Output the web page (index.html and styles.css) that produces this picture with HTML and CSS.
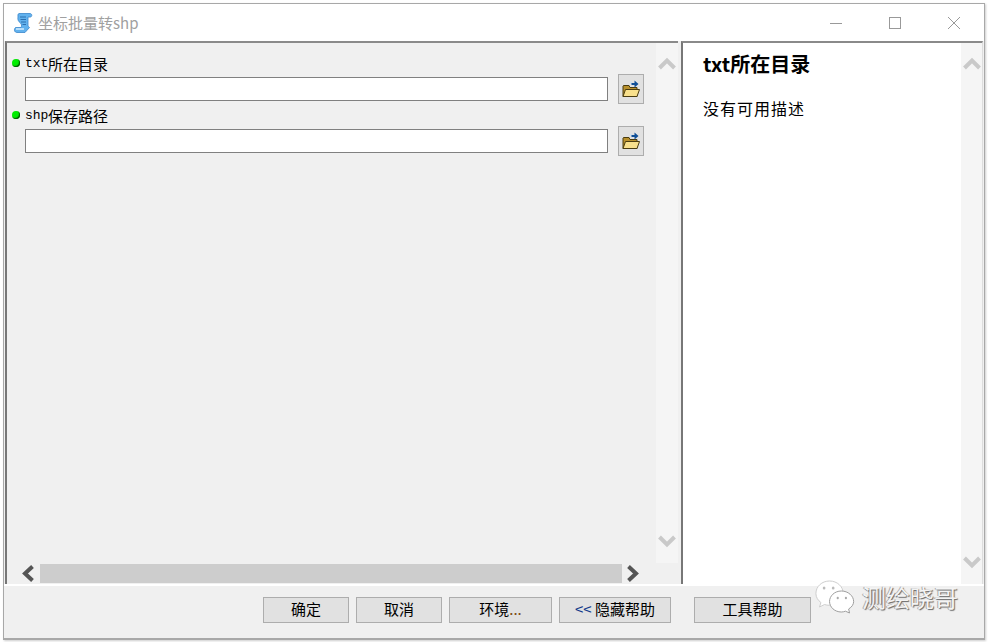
FILE: index.html
```html
<!DOCTYPE html>
<html lang="zh">
<head>
<meta charset="utf-8">
<title>坐标批量转shp</title>
<link rel="stylesheet" href="styles.css">
</head>
<body>
<svg class="defs" width="0" height="0" aria-hidden="true">
  <symbol id="folder" viewBox="0 0 18 18">
    <path d="M1 6V16.500H15V7.500H8L7 5.500H1.500Z" fill="#b8902c" stroke="#4a3c10" stroke-width="1"/>
    <path d="M1 16.500L3.500 9.500H17.500L15 16.500Z" fill="#f8e08c" stroke="#4a3c10" stroke-width="1"/>
    <path d="M8 2.500C8 2.500 9 1.500 10 1.500V4H8Z" fill="#cfe0f0"/>
    <path d="M9.500 3H12.500V.5L16.500 4L12.500 7.500V5H9.500Z" fill="#0f4f98"/>
  </symbol>
</svg>
<div class="window">
  <header class="titlebar">
    <svg class="appicon" width="20" height="22" viewBox="0 0 20 22">
      <path d="M6 1.500H17C19 1.500 19.500 4.500 17.500 5H15V13C15 14 15.500 15 16.500 15.500L12 20.500H4C1.500 20.500 .5 17.500 2.500 15.500H8C9 14 8.500 12 7.500 11C5 9.500 4.500 7 5 5C5 3.500 4.500 2 6 1.500Z" fill="#62b2ee" stroke="#3a86cc" stroke-width=".8"/>
      <path d="M7 5H13M7.500 7.500H13M8 10H13M9.500 12.500H13" stroke="#1f5f9f" stroke-width=".8"/>
      <path d="M3 17H11" stroke="#d5edff" stroke-width="1.500"/>
    </svg>
    <span class="title">坐标批量转shp</span>
    <div class="winctl">
      <svg width="12" height="12" viewBox="0 0 12 12"><path d="M0 6.500H12" stroke="#999" stroke-width="1"/></svg>
      <svg width="12" height="12" viewBox="0 0 12 12"><rect x=".5" y=".5" width="11" height="11" fill="none" stroke="#999"/></svg>
      <svg width="12" height="12" viewBox="0 0 12 12"><path d="M0 0L12 12M12 0L0 12" stroke="#999" stroke-width="1"/></svg>
    </div>
  </header>
  <div class="main">
    <section class="left">
      <div class="leftrow">
        <div class="form">
          <div class="field">
            <div class="label"><i class="dot"></i><span class="mono">txt</span>所在目录</div>
            <div class="inputrow">
              <div class="input"></div>
              <button class="browse" type="button"><svg width="18" height="18"><use href="#folder"/></svg></button>
            </div>
          </div>
          <div class="field">
            <div class="label"><i class="dot"></i><span class="mono">shp</span>保存路径</div>
            <div class="inputrow">
              <div class="input"></div>
              <button class="browse" type="button"><svg width="18" height="18"><use href="#folder"/></svg></button>
            </div>
          </div>
        </div>
        <div class="vscroll">
          <svg width="18" height="13" viewBox="0 0 18 13"><path d="M1.500 11L9 3.500L16.500 11" fill="none" stroke="#c9c9c9" stroke-width="4"/></svg>
          <svg width="18" height="13" viewBox="0 0 18 13"><path d="M1.500 2L9 9.500L16.500 2" fill="none" stroke="#c9c9c9" stroke-width="4"/></svg>
        </div>
      </div>
      <div class="hscroll">
        <svg class="harrow" width="14" height="17" viewBox="0 0 14 17"><path d="M11.500 1.500L4 8.500L11.500 15.500" fill="none" stroke="#555" stroke-width="4"/></svg>
        <div class="thumb"></div>
        <svg class="harrow" width="14" height="17" viewBox="0 0 14 17"><path d="M2.500 1.500L10 8.500L2.500 15.500" fill="none" stroke="#555" stroke-width="4"/></svg>
      </div>
    </section>
    <section class="right">
      <div class="help">
        <h1 class="helptitle">txt所在目录</h1>
        <p class="helptext">没有可用描述</p>
      </div>
      <div class="vscroll rightscroll">
        <svg width="18" height="13" viewBox="0 0 18 13"><path d="M1.500 11L9 3.500L16.500 11" fill="none" stroke="#c9c9c9" stroke-width="4"/></svg>
        <svg width="18" height="13" viewBox="0 0 18 13"><path d="M1.500 2L9 9.500L16.500 2" fill="none" stroke="#c9c9c9" stroke-width="4"/></svg>
      </div>
    </section>
  </div>
  <footer class="footer">
    <button class="btn w86" type="button">确定</button>
    <button class="btn w86" type="button">取消</button>
    <button class="btn w103" type="button">环境<span class="dots">...</span></button>
    <button class="btn w112" type="button"><span class="arrows">&lt;&lt;</span> 隐藏帮助</button>
    <button class="btn w117 gapl" type="button">工具帮助</button>
  </footer>
  <div class="watermark">
    <svg width="40" height="34" viewBox="0 0 44 34" preserveAspectRatio="none">
      <path d="M16 1C7.500 1 1 6.500 1 13.500C1 17.500 3.500 20.500 6.500 22.500L5 27L10.500 24.500C12 25 14 25.300 16 25.300C24 25.300 31 20 31 13.500C31 6.500 24.500 1 16 1Z" fill="#fff" stroke="#ccc" stroke-width="1"/>
      <path d="M29 11C21.500 11 16 16 16 21.500C16 27 21.500 32 29 32C30.500 32 32 31.700 33.500 31.200L38 33L37 29C40.500 27 42.500 24.500 42.500 21.500C42.500 16 36.500 11 29 11Z" fill="#fff" stroke="#999" stroke-width="1"/>
      <circle cx="10" cy="8" r="1.500" fill="#bbb"/><circle cx="20" cy="8" r="1.500" fill="#bbb"/>
      <circle cx="25" cy="18" r="1.200" fill="#aaa"/><circle cx="34" cy="18" r="1.200" fill="#aaa"/>
    </svg>
    <span class="wmtext">测绘晓哥</span>
  </div>
</div>
</body>
</html>
```
FILE: styles.css
```css
* { box-sizing: border-box; }
html, body { margin: 0; height: 100%; background: #fff; overflow: hidden; }
body {
  padding: 3px 5px 2px 3px;
  font-family: "Noto Sans CJK SC", "Liberation Sans", sans-serif;
  color: #000;
}
.defs { position: absolute; }
.window {
  position: relative;
  display: flex;
  flex-direction: column;
  height: 637px;
  border: 1px solid #a8a8a8;
  border-width: 1px 1px 2px 1px;
  background: #f0f0f0;
  box-shadow: 1px 1px 2px rgba(0, 0, 0, .2);
}
.titlebar {
  display: flex;
  align-items: center;
  height: 37px;
  flex: none;
  background: #fff;
  padding-left: 9px;
}
.appicon { flex: none; }
.title {
  margin-left: 5px;
  font-size: 15px;
  line-height: 20px;
  color: #a0a0a0;
}
.winctl {
  margin-left: auto;
  display: flex;
  gap: 47px;
  padding-right: 24px;
}
.main {
  flex: 1;
  display: flex;
  min-height: 0;
  margin: 0 1px;
}
.left {
  width: 673px;
  flex: none;
  display: flex;
  flex-direction: column;
  background: #f0f0f0;
  border-left: 2px solid #777;
  border-top: 2px solid #8a8a8a;
}
.leftrow { flex: 1; display: flex; min-height: 0; }
.form { flex: 1; padding-top: 10px; }
.field { height: 52px; }
.label {
  display: flex;
  align-items: center;
  height: 22px;
  font-size: 15px;
  line-height: 22px;
  padding-left: 5px;
}
.dot {
  width: 8px;
  height: 8px;
  border-radius: 50%;
  background: #00ee00;
  box-shadow: inset -1px -1px 1px #005000;
  margin-right: 5px;
  margin-top: -3px;
  flex: none;
}
.mono { font-family: "Liberation Mono", monospace; font-size: 13px; width: 23px; }
.inputrow { display: flex; align-items: center; padding-left: 18px; gap: 10px; margin-top: 2px; height: 24px; }
.input { width: 583px; height: 24px; background: #fff; border: 1px solid #808080; flex: none; }
.browse {
  width: 26px;
  height: 30px;
  padding: 0;
  flex: none;
  display: flex;
  align-items: center;
  justify-content: center;
  background: #e1e1e1;
  border: 1px solid #adadad;
  border-radius: 0;
}
.vscroll {
  width: 22px;
  flex: none;
  display: flex;
  flex-direction: column;
  justify-content: space-between;
  align-items: center;
  background: #f5f5f5;
  padding: 14px 0 15px;
}
.hscroll { height: 21px; flex: none; display: flex; align-items: flex-end; padding: 0 0 1px 14px; margin-right: 22px; }
.harrow { margin-bottom: 1px; flex: none; }
.thumb { width: 582px; height: 19px; background: #cdcdcd; margin-left: 5px; margin-right: 4px; flex: none; }
.right {
  flex: 1;
  margin-left: 3px;
  display: flex;
  background: #fff;
  border-left: 2px solid #777;
  border-top: 2px solid #8a8a8a;
  border-right: 1px solid #ddd;
  min-width: 0;
}
.help { flex: 1; padding: 7px 0 0 20px; }
.helptitle { margin: 0; font-size: 20px; line-height: 28px; font-weight: 700; }
.helptext { margin: 19px 0 0; font-size: 16px; letter-spacing: 1px; line-height: 22px; }
.rightscroll { padding-bottom: 15px; width: 21px; }
.footer {
  height: 54px;
  flex: none;
  display: flex;
  align-items: flex-start;
  gap: 7px;
  padding: 11px 0 0 259px;
  border-top: 2px solid #fff;
  background: #f0f0f0;
}
.btn {
  height: 26px;
  padding: 0 0 2px;
  font-family: inherit;
  font-size: 15px;
  line-height: 22px;
  background: #e1e1e1;
  border: 1px solid #adadad;
  border-radius: 0;
  color: #000;
}
.w86 { width: 86px; }
.w103 { width: 103px; }
.w112 { width: 112px; }
.w117 { width: 117px; }
.gapl { margin-left: 16px; }
.dots { color: #7a4a10; }
.arrows { color: #123a8a; }
.watermark {
  position: absolute;
  right: 26px;
  bottom: 24px;
  display: flex;
  align-items: center;
  gap: 7px;
}
.wmtext {
  font-size: 24px;
  line-height: 30px;
  color: #f4f4f4;
  text-shadow: 1px 1px 1px #666, -1px 0 0 #aaa;
}
```
